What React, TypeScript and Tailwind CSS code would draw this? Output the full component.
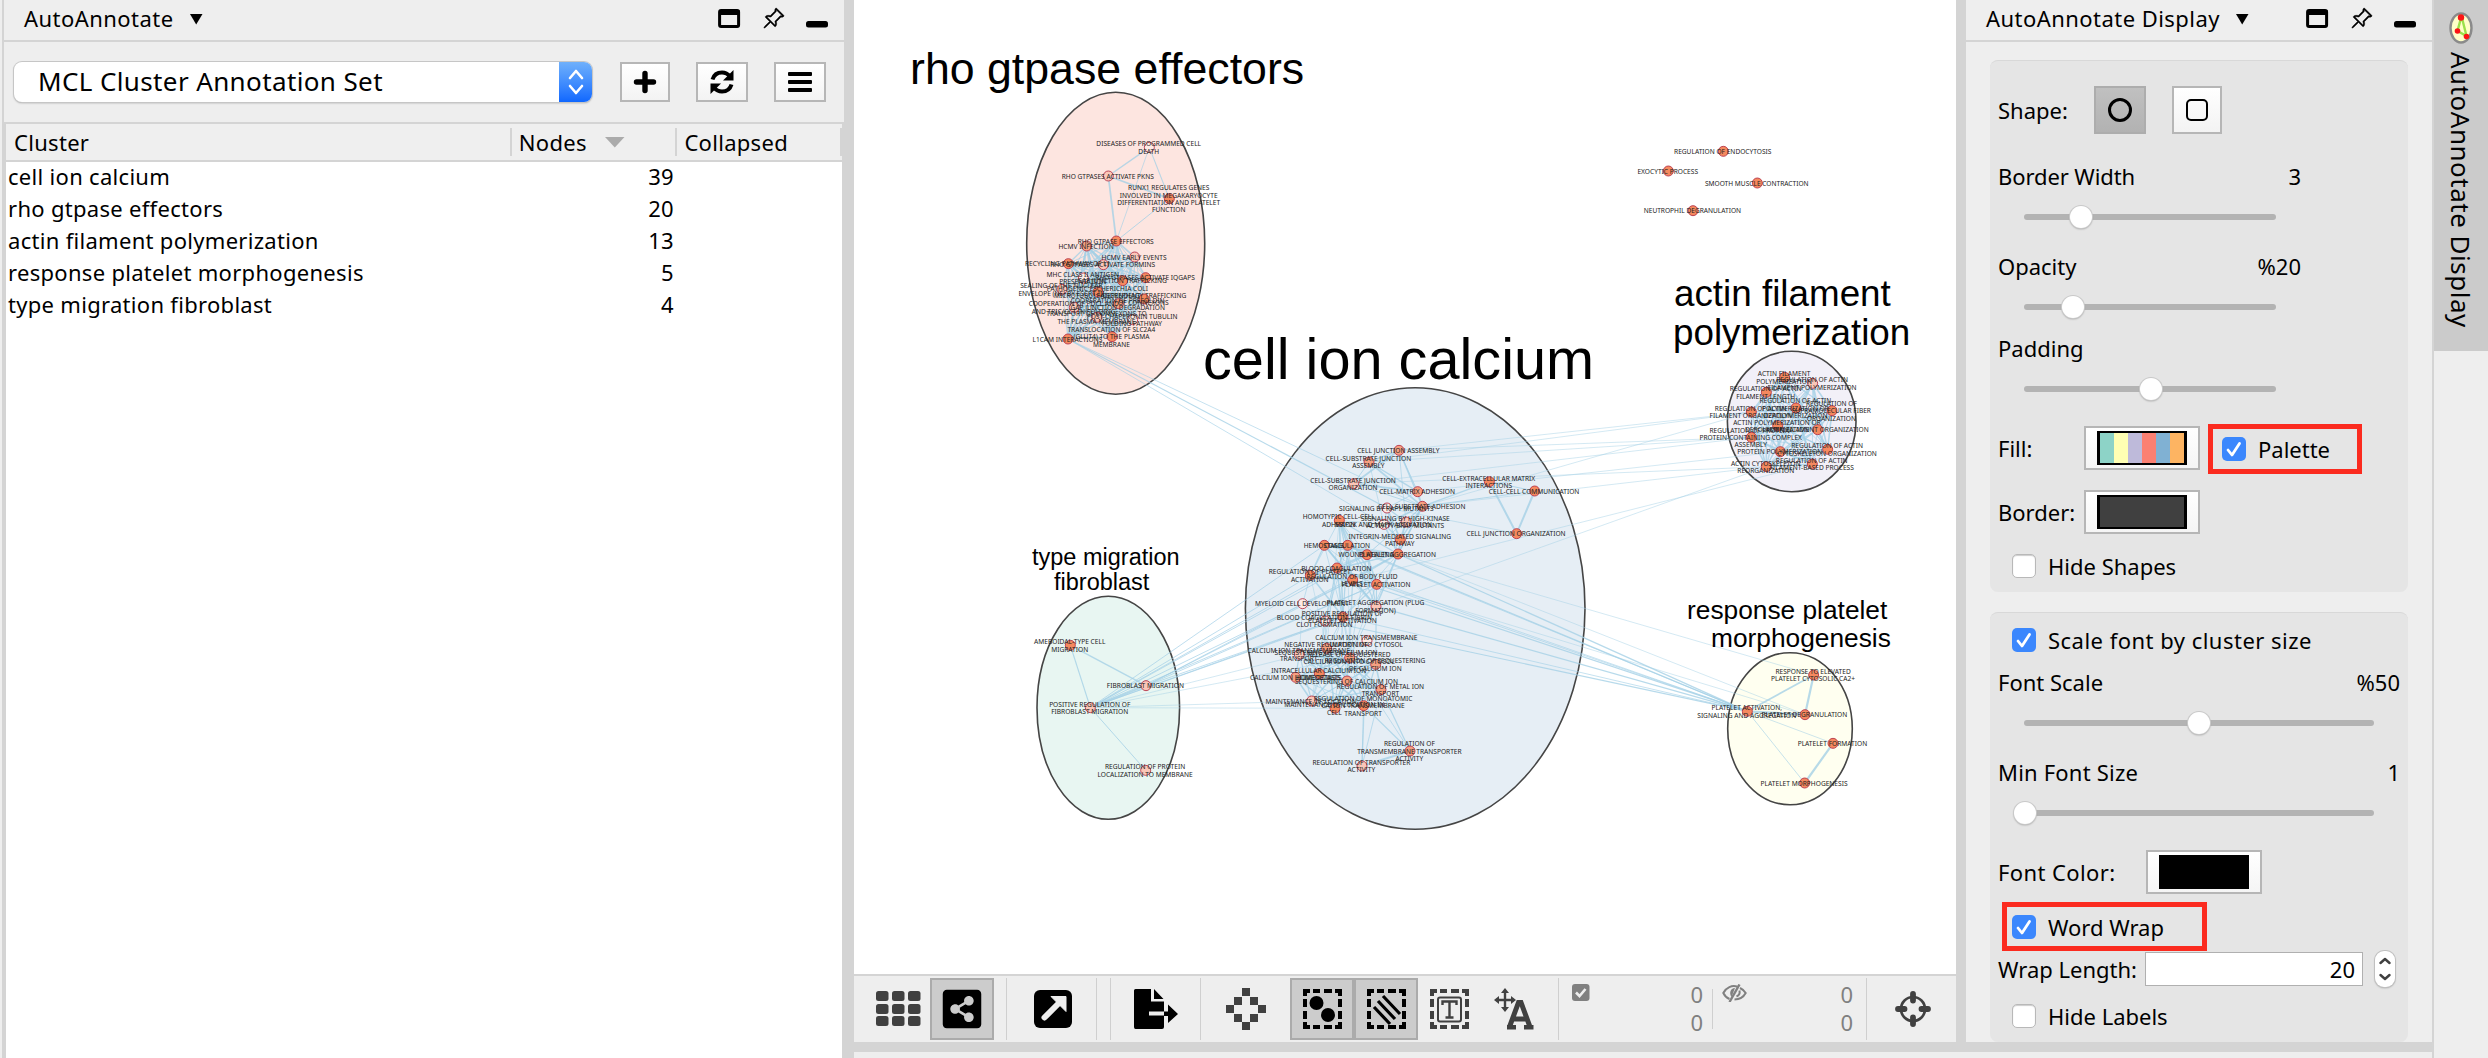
import React from 'react';
import { BsPinAngle } from 'react-icons/bs';
import { FaShareAltSquare } from 'react-icons/fa';

type GraphNode = [number, number, string, string];
type Cluster = { ox: number; oy: number; nodes: GraphNode[] };

const O = '#f5895f';
const M = '#f6a182';
const L = '#fac6b8';
const W = '#fdeae5';

const rho: Cluster = {
  ox: 1000,
  oy: 80,
  nodes: [
    [448, 202, W, 'DISEASES OF PROGRAMMED CELL|DEATH'],
    [325, 288, L, 'RHO GTPASES ACTIVATE PKNS'],
    [508, 356, O, 'RUNX1 REGULATES GENES|INVOLVED IN MEGAKARYOCYTE|DIFFERENTIATION AND PLATELET|FUNCTION'],
    [349, 483, O, 'RHO GTPASE EFFECTORS'],
    [260, 498, M, 'HCMV INFECTION'],
    [404, 531, L, 'HCMV EARLY EVENTS'],
    [205, 551, O, 'RECYCLING PATHWAY OF L1'],
    [310, 554, L, 'RHO GTPASES ACTIVATE FORMINS'],
    [250, 594, W, 'MHC CLASS II ANTIGEN|PRESENTATION'],
    [437, 593, O, 'RHO GTPASES ACTIVATE IQGAPS'],
    [368, 602, O, 'GAP JUNCTION TRAFFICKING'],
    [186, 628, L, 'SEALING OF THE NUCLEAR|ENVELOPE (NE) BY ESCRT-III'],
    [294, 636, O, 'PATHOGENIC ESCHERICHIA COLI|MICROTUBULE-DEPENDENT'],
    [432, 657, O, 'AGGREPHAGY TRAFFICKING|OF CONNEXONS'],
    [355, 671, M, 'COOPERATION OF PREFOLDIN|GAP JUNCTION DEGRADATION'],
    [223, 682, L, 'COOPERATION OF PDCL AND|AND TRIC/CCT IN FOLDING'],
    [291, 712, L, 'TRANSPORT OF CONNEXONS TO|THE PLASMA MEMBRANE'],
    [398, 719, W, 'POST-CHAPERONIN TUBULIN|FOLDING PATHWAY'],
    [336, 770, O, 'TRANSLOCATION OF SLC2A4|(GLUT4) TO THE PLASMA|MEMBRANE'],
    [204, 777, O, 'L1CAM INTERACTIONS'],
  ],
};

const cell: Cluster = {
  ox: 1230,
  oy: 410,
  nodes: [
    [507, 121, M, 'CELL JUNCTION ASSEMBLY'],
    [417, 156, M, 'CELL-SUBSTRATE JUNCTION|ASSEMBLY'],
    [371, 221, L, 'CELL-SUBSTRATE JUNCTION|ORGANIZATION'],
    [563, 245, M, 'CELL-MATRIX ADHESION'],
    [577, 289, M, 'CELL-SUBSTRATE ADHESION'],
    [471, 294, W, 'SIGNALING BY RAF1 MUTANTS'],
    [778, 215, O, 'CELL-EXTRACELLULAR MATRIX|INTERACTIONS'],
    [914, 243, O, 'CELL-CELL COMMUNICATION'],
    [860, 371, O, 'CELL JUNCTION ORGANIZATION'],
    [328, 331, O, 'HOMOTYPIC CELL-CELL|ADHESION'],
    [462, 343, W, 'MAP2K AND MAPK ACTIVATION'],
    [528, 336, L, 'SIGNALING BY HIGH-KINASE|ACTIVITY BRAF MUTANTS'],
    [511, 389, O, 'INTEGRIN-MEDIATED SIGNALING|PATHWAY'],
    [283, 406, O, 'HEMOSTASIS'],
    [353, 406, O, 'COAGULATION'],
    [411, 434, O, 'WOUND HEALING'],
    [504, 432, O, 'PLATELET AGGREGATION'],
    [321, 474, O, 'BLOOD COAGULATION'],
    [241, 496, O, 'REGULATION OF PLATELET|ACTIVATION'],
    [368, 510, O, 'REGULATION OF BODY FLUID|LEVELS'],
    [440, 523, O, 'PLATELET ACTIVATION'],
    [218, 581, W, 'MYELOID CELL DEVELOPMENT'],
    [438, 589, L, 'PLATELET AGGREGATION (PLUG|FORMATION)'],
    [339, 621, O, 'POSITIVE REGULATION OF|PLATELET ACTIVATION'],
    [285, 633, W, 'BLOOD COAGULATION, FIBRIN|CLOT FORMATION'],
    [411, 692, W, 'CALCIUM ION TRANSMEMBRANE|IMPORT INTO CYTOSOL'],
    [290, 715, M, 'NEGATIVE REGULATION OF|SEQUESTERING OF CALCIUM ION'],
    [208, 733, L, 'CALCIUM ION TRANSMEMBRANE|TRANSPORT'],
    [359, 744, M, 'RELEASE OF SEQUESTERED|CALCIUM ION INTO CYTOSOL'],
    [437, 763, M, 'REGULATION OF SEQUESTERING|OF CALCIUM ION'],
    [268, 791, O, 'INTRACELLULAR CALCIUM ION|HOMEOSTASIS'],
    [197, 802, M, 'CALCIUM ION HOMEOSTASIS'],
    [351, 813, M, 'SEQUESTERING OF CALCIUM ION'],
    [453, 839, M, 'REGULATION OF METAL ION|TRANSPORT'],
    [245, 873, L, 'MAINTENANCE OF LOCATION'],
    [401, 887, O, 'REGULATION OF MONOATOMIC|CATION TRANSMEMBRANE|TRANSPORT'],
    [315, 895, O, 'MAINTENANCE OF LOCATION IN|CELL'],
    [540, 1023, M, 'REGULATION OF|TRANSMEMBRANE TRANSPORTER|ACTIVITY'],
    [396, 1068, L, 'REGULATION OF TRANSPORTER|ACTIVITY'],
  ],
};

const actin: Cluster = {
  ox: 1640,
  oy: 270,
  nodes: [
    [434, 322, O, 'ACTIN FILAMENT|POLYMERIZATION'],
    [518, 340, L, 'REGULATION OF ACTIN|FILAMENT POLYMERIZATION'],
    [379, 367, O, 'REGULATION OF ACTIN|FILAMENT LENGTH'],
    [468, 414, O, 'REGULATION OF ACTIN|POLYMERIZATION OR|DEPOLYMERIZATION'],
    [576, 422, O, 'REGULATION OF|SUPRAMOLECULAR FIBER|ORGANIZATION'],
    [334, 426, O, 'REGULATION OF ACTIN|FILAMENT ORGANIZATION'],
    [413, 467, O, 'ACTIN POLYMERIZATION OR|DEPOLYMERIZATION'],
    [533, 479, O, 'ACTIN FILAMENT ORGANIZATION'],
    [334, 502, O, 'REGULATION OF PROTEIN-|PROTEIN-CONTAINING COMPLEX|ASSEMBLY'],
    [421, 545, O, 'PROTEIN POLYMERIZATION'],
    [563, 538, O, 'REGULATION OF ACTIN|CYTOSKELETON ORGANIZATION'],
    [517, 582, O, 'REGULATION OF ACTIN|FILAMENT-BASED PROCESS'],
    [379, 590, O, 'ACTIN CYTOSKELETON|REORGANIZATION'],
  ],
};

const fibro: Cluster = {
  ox: 1000,
  oy: 530,
  nodes: [
    [211, 346, O, 'AMEBOIDAL-TYPE CELL|MIGRATION'],
    [438, 467, L, 'FIBROBLAST MIGRATION'],
    [271, 533, L, 'POSITIVE REGULATION OF|FIBROBLAST MIGRATION'],
    [437, 721, L, 'REGULATION OF PROTEIN|LOCALIZATION TO MEMBRANE'],
  ],
};

const platelet: Cluster = {
  ox: 1640,
  oy: 590,
  nodes: [
    [521, 255, O, 'RESPONSE TO ELEVATED|PLATELET CYTOSOLIC CA2+'],
    [322, 364, O, 'PLATELET ACTIVATION,|SIGNALING AND AGGREGATION'],
    [495, 374, O, 'PLATELET DEGRANULATION'],
    [579, 460, O, 'PLATELET FORMATION'],
    [494, 579, O, 'PLATELET MORPHOGENESIS'],
  ],
};

const loose: Cluster = {
  ox: 1630,
  oy: 135,
  nodes: [
    [280, 49, O, 'REGULATION OF ENDOCYTOSIS'],
    [115, 108, O, 'EXOCYTIC PROCESS'],
    [382, 144, O, 'SMOOTH MUSCLE CONTRACTION'],
    [189, 227, O, 'NEUTROPHIL DEGRANULATION'],
  ],
};

const clusters = [rho, cell, actin, fibro, platelet, loose];

const at = (c: Cluster, i: number): [number, number] => [c.ox + c.nodes[i][0] / 3, c.oy + c.nodes[i][1] / 3];

type Edge = [Cluster, number, Cluster, number, number];
const edges: Edge[] = [];
const link = (a: Cluster, i: number, b: Cluster, j: number, w = 0.8) => edges.push([a, i, b, j, w]);
const mesh = (c: Cluster, ids: number[], w: number, skip = 0) => {
  ids.forEach((a, p) =>
    ids.slice(p + 1).forEach((b) => {
      if (!skip || (a * 7 + b * 5) % skip !== 0) link(c, a, c, b, w + ((a + b) % 3) * 0.4);
    }),
  );
};
const span = (a: number, b: number) => Array.from({ length: b - a + 1 }, (_, i) => a + i);

mesh(rho, span(3, 19), 0.9);
link(rho, 0, rho, 1, 1.4);
link(rho, 0, rho, 2, 1.1);
link(rho, 0, rho, 3, 0.8);
link(rho, 1, rho, 2, 1.8);
link(rho, 1, rho, 3, 1.8);
link(rho, 2, rho, 3, 1);

mesh(cell, [0, 1, 2, 3, 4], 1);
mesh(cell, [4, 5, 10, 11, 12, 16], 0.9);
mesh(cell, [9, 13, 14, 15, 16, 17, 18, 19, 20, 22, 23], 0.8, 4);
mesh(cell, span(25, 36), 0.8, 5);
([[6, 8, 2], [7, 8, 2], [6, 7, 1], [6, 4, 1.4], [7, 4, 1], [8, 5, 0.7], [37, 38, 2], [37, 35, 1.2], [37, 33, 1.2], [37, 28, 0.8], [38, 35, 1.2], [38, 33, 0.9],
  [38, 25, 0.6], [21, 24, 0.8], [21, 18, 0.8], [21, 27, 0.6], [24, 17, 1], [24, 14, 0.8], [24, 23, 1], [23, 28, 0.9], [23, 26, 0.9], [20, 29, 0.8], [20, 28, 0.8],
  [19, 28, 0.7], [19, 32, 0.7], [17, 32, 0.7], [17, 30, 0.7], [22, 29, 0.6], [9, 26, 0.6], [14, 28, 0.6], [15, 4, 1], [16, 4, 1.2], [9, 10, 0.8], [5, 3, 0.9],
  [10, 1, 0.7], [11, 0, 0.8], [24, 26, 0.7], [24, 30, 0.7], [24, 34, 0.6], [18, 26, 0.6], [16, 28, 0.9], [15, 28, 0.8], [23, 36, 0.7], [23, 34, 0.7], [23, 35, 0.7]] as number[][])
  .forEach(([a, b, w]) => link(cell, a, cell, b, w));

mesh(actin, span(0, 12), 0.8);

link(fibro, 0, fibro, 1, 1.4);
link(fibro, 0, fibro, 2, 1.2);
link(fibro, 2, fibro, 3, 1);
link(fibro, 1, fibro, 2, 2);
[13, 15, 17, 18, 19, 20, 22, 23].forEach((n) => link(fibro, 2, cell, n, 0.9));
[16, 19, 20, 23].forEach((n) => link(fibro, 1, cell, n, 0.9));
[26, 28, 34, 36].forEach((n) => link(fibro, 2, cell, n, 0.6));

link(platelet, 0, platelet, 1, 1.8);
link(platelet, 0, platelet, 2, 2.2);
link(platelet, 1, platelet, 2, 2.4);
link(platelet, 1, platelet, 3, 0.7);
link(platelet, 1, platelet, 4, 0.8);
link(platelet, 3, platelet, 4, 2.2);
[14, 15, 16, 17, 19, 20, 22, 23, 24].forEach((n, i) => link(cell, n, platelet, 1, i % 2 ? 0.8 : 1.2));
link(cell, 16, platelet, 0, 0.6);
link(cell, 16, platelet, 2, 0.6);
link(cell, 20, platelet, 2, 0.6);

link(rho, 19, cell, 5, 1.2);
link(rho, 19, cell, 4, 0.8);
link(rho, 19, cell, 10, 0.8);

([[0, 5], [1, 5], [0, 8], [1, 8], [2, 8], [4, 5], [3, 9], [4, 12], [2, 12], [22, 12], [19, 11]] as number[][]).forEach(([a, b]) => link(cell, a, actin, b, 0.6));

const hulls: [number, number, number, number, string][] = [
  [1115.7, 243.3, 89, 151, '#fde5e0'],
  [1415.2, 608.5, 169.8, 220.8, '#e6eef5'],
  [1791.7, 421.5, 64.3, 70.2, '#f2f0f8'],
  [1108.3, 707.8, 71.3, 111.5, '#e8f6f2'],
  [1790, 728.7, 62.3, 76, '#fffff0'],
];

const titles: [number, number, number, string][] = [
  [910, 84, 44.7, 'rho gtpase effectors'],
  [1203, 379, 57.7, 'cell ion calcium'],
  [1674, 305.7, 36.8, 'actin filament'],
  [1673, 345, 36.8, 'polymerization'],
  [1032, 565, 23.5, 'type migration'],
  [1054, 590, 23.5, 'fibroblast'],
  [1687, 619, 26.3, 'response platelet'],
  [1711, 646.7, 26.3, 'morphogenesis'],
];

function Network() {
  return (
    <svg width="1102" height="974" viewBox="854 0 1102 974" className="block shrink-0 bg-white">
      {hulls.map(([cx, cy, rx, ry, fill]) => (
        <ellipse key={cx} cx={cx} cy={cy} rx={rx} ry={ry} fill={fill} stroke="#454545" strokeWidth="1.6" />
      ))}
      <g stroke="#a3d0e6" strokeOpacity="0.78">
        {edges.map(([a, i, b, j, w], k) => {
          const [x1, y1] = at(a, i);
          const [x2, y2] = at(b, j);
          return <line key={k} x1={x1} y1={y1} x2={x2} y2={y2} strokeWidth={w} />;
        })}
      </g>
      {clusters.map((c, ci) => (
        <g key={ci}>
          {c.nodes.map((n, i) => {
            const [x, y] = at(c, i);
            return <circle key={i} cx={x} cy={y} r="5" fill={n[2]} stroke="#b5364a" strokeWidth="0.9" />;
          })}
          {c.nodes.map((n, i) => {
            const [x, y] = at(c, i);
            const lines = n[3].split('|');
            return lines.map((t, k) => (
              <text
                key={i + '-' + k}
                x={x - 0.6}
                y={y + 2.6 + (k - (lines.length - 1) / 2) * 7.4}
                textAnchor="middle"
                fontSize="6.6"
                fill="#222"
                fontFamily="'Noto Sans', sans-serif"
              >
                {t}
              </text>
            ));
          })}
        </g>
      ))}
      {titles.map(([x, y, s, t]) => (
        <text key={t} x={x} y={y} fontSize={s} fill="#000" fontFamily="'Liberation Sans', Arial, sans-serif">
          {t}
        </text>
      ))}
    </svg>
  );
}

function PanelHeader({ title }: { title: string }) {
  return (
    <div className="flex h-[42px] shrink-0 items-center border-b-2 border-[#d4d4d4] pr-4 pl-5">
      <span className="relative -top-[2.5px] tracking-[0.45px]">{title}</span>
      <svg width="13" height="11" className="relative -top-[1px] ml-4 shrink-0">
        <path d="M0 0H12.5L6.2 10.5Z" />
      </svg>
      <svg width="23" height="20" className="relative -top-[1px] ml-auto shrink-0">
        <rect x="1.6" y="1.6" width="19" height="16" rx="1.5" fill="none" stroke="#000" strokeWidth="3" />
        <path d="M1 1H21.5V6H1Z" />
      </svg>
      <BsPinAngle className="relative -top-[2px] ml-[21px] size-[23px] shrink-0" stroke="#000" strokeWidth="0.3" />
      <svg width="22" height="20" className="relative -top-[1px] ml-[21px] shrink-0">
        <rect y="12" width="22" height="6.5" rx="2.5" />
      </svg>
    </div>
  );
}

const iconButton = 'flex h-10 shrink-0 items-center justify-center border-2 border-[#b6b6b6] bg-linear-to-b from-white to-[#f3f3f3]';

const rows: [string, number][] = [
  ['cell ion calcium', 39],
  ['rho gtpase effectors', 20],
  ['actin filament polymerization', 13],
  ['response platelet morphogenesis', 5],
  ['type migration fibroblast', 4],
];

function LeftPanel() {
  return (
    <div className="flex h-full w-[842px] shrink-0 flex-col border-l-2 border-[#d4d4d4]">
      <PanelHeader title="AutoAnnotate" />
      <div className="flex h-20 shrink-0 items-center pr-4 pl-[10px]">
        <div className="flex h-10 w-[578px] shrink-0 overflow-hidden rounded-[8px] bg-white shadow-[0_0_0_1px_#c6c6c6,0_1px_2px_#999]">
          <span className="flex-1 pl-[24px] text-[26px] leading-[38px] tracking-[0.38px]">MCL Cluster Annotation Set</span>
          <div className="flex w-[33px] items-center justify-center bg-linear-to-b from-[#6fb0fb] to-[#0f67fe]">
            <svg width="16" height="26" fill="none" stroke="#fff" strokeWidth="2.6" strokeLinecap="round" strokeLinejoin="round">
              <path d="M2 9L8 2L14 9M2 17L8 24L14 17" />
            </svg>
          </div>
        </div>
        <div className="ml-7 flex gap-[26px]">
          <div className={iconButton + ' w-[50px]'}>
            <svg width="24" height="24" stroke="#000" strokeWidth="5.4" strokeLinecap="round">
              <path d="M12 3.500V20.500M3.500 12H20.500" />
            </svg>
          </div>
          <div className={iconButton + ' w-[52px]'}>
            <svg width="26" height="26" fill="none" stroke="#000" strokeWidth="4">
              <path d="M3.500 10.500C5 5.500 9 3.500 13 3.500C16.500 3.500 19 5 21 7.500" />
              <path d="M22.500 15.500C21 20.500 17 22.500 13 22.500C9.500 22.500 7 21 5 18.500" />
              <path d="M24.500 1V11.500H14Z" fill="#000" stroke="none" />
              <path d="M1.500 25V14.500H12Z" fill="#000" stroke="none" />
            </svg>
          </div>
          <div className={iconButton + ' w-[52px]'}>
            <svg width="24" height="22">
              <rect y="1" width="24" height="4" rx="1" />
              <rect y="9" width="24" height="4" rx="1" />
              <rect y="17" width="24" height="4" rx="1" />
            </svg>
          </div>
        </div>
      </div>
      <div className="flex flex-1 flex-col border-t-2 border-r-2 border-l-2 border-[#d4d4d4] bg-white tracking-[0.3px]">
        <div className="flex h-[38px] shrink-0 items-center border-b-2 border-[#d4d4d4] bg-[#efefef]">
          <span className="w-[505px] pl-2">Cluster</span>
          <div className="flex h-7 w-[166px] items-center border-l-2 border-[#d4d4d4] pl-[7px]">
            Nodes
            <svg width="20" height="11" className="ml-[18px]">
              <path d="M0 0H19.500L9.800 10.500Z" fill="#ababab" />
            </svg>
          </div>
          <div className="flex h-7 w-[167px] items-center border-x-2 border-[#d4d4d4] pl-[7px]">Collapsed</div>
        </div>
        <div className="-mt-[2.5px] flex flex-col">
          {rows.map(([name, count]) => (
            <div key={name} className="flex h-8 shrink-0 items-center">
              <span className="w-[505px] pl-[2px]">{name}</span>
              <span className="w-[163px] text-right">{count}</span>
            </div>
          ))}
        </div>
      </div>
    </div>
  );
}

function DashedFrame({ color, children }: { color: string; children: React.ReactNode }) {
  return (
    <svg width="41" height="42" fill={color}>
      <path d="M1 7V1H8V5H5V8H1ZM33 1H40V8H36V5H33ZM1 34H5V37H8V41H1ZM36 34H40V41H33V37H36Z" />
      <path d="M11 1H18V5H11ZM22 1H30V5H22ZM11 37H18V41H11ZM22 37H30V41H22ZM1 11H5V19H1ZM1 23H5V31H1ZM36 11H40V19H36ZM36 23H40V31H36Z" />
      {children}
    </svg>
  );
}

const sep = 'h-[62px] w-px shrink-0 bg-[#cfcfcf]';
const toggled = 'flex h-[62px] w-16 shrink-0 items-center justify-center border-2 border-[#ababab] bg-[#cccccc]';

function Counts({ icon }: { icon: React.ReactNode }) {
  return (
    <div className="flex h-[62px] justify-between text-[#808080]">
      <div className="pt-[6px]">{icon}</div>
      <div className="flex flex-col text-right leading-7">
        <span className="pt-[2px]">0</span>
        <span>0</span>
      </div>
    </div>
  );
}

function Toolbar() {
  return (
    <div className="flex h-[68px] shrink-0 items-center border-t-2 border-[#d4d4d4] bg-[#eeeeee] text-black">
      <svg width="46" height="36" className="ml-[21px] shrink-0" fill="#404040">
        {[0, 13, 25].map((y) => [1, 17, 33].map((x) => <rect key={x + '-' + y} x={x} y={y} width="12.500" height="10" rx="2.500" />))}
      </svg>
      <div className={toggled + ' ml-[9px]'}>
        <FaShareAltSquare className="size-[44px]" />
      </div>
      <div className={sep + ' ml-3'} />
      <svg width="38" height="38" className="ml-[27px] shrink-0">
        <rect width="38" height="38" rx="6" />
        <path d="M10.500 27.500L25 13" stroke="#eee" strokeWidth="6" strokeLinecap="round" />
        <path d="M17 6.500H32V21.500Z" fill="#eee" stroke="#eee" strokeWidth="1" strokeLinejoin="round" />
      </svg>
      <div className={sep + ' ml-6'} />
      <div className={sep + ' ml-[13px]'} />
      <svg width="45" height="40" className="ml-[23px] shrink-0">
        <path d="M1.500 0H17V12.500H30V22.500H15V26.500H30V38Q30 40 28 40H1.500Q0 40 0 38V1.500Q0 0 1.500 0ZM20 0L29.500 10H20ZM30 22.500H34V15.500L44 25L34 34V27H30Z" />
      </svg>
      <div className={sep + ' ml-[21px]'} />
      <svg width="40" height="42" className="ml-[25px] shrink-0" fill="#404040">
        <path d="M16 0h8v8h-8zM8 9h8v8h-8zM24 9h8v8h-8zM0 17h8v8h-8zM32 17h8v8h-8zM8 26h8v8h-8zM24 26h8v8h-8zM16 34h8v8h-8z" />
      </svg>
      <div className={toggled + ' ml-6'}>
        <DashedFrame color="#000">
          <circle cx="14.500" cy="15" r="7" />
          <circle cx="26" cy="27" r="7" />
        </DashedFrame>
      </div>
      <div className={toggled}>
        <DashedFrame color="#000">
          <path d="M8 19L24 36M12 13L29 31M17 8L34 26" stroke="#000" strokeWidth="3.200" />
        </DashedFrame>
      </div>
      <div className="ml-[11px] shrink-0">
        <DashedFrame color="#404040">
          <rect x="9" y="9.500" width="23" height="24" rx="2" fill="none" stroke="#404040" strokeWidth="2" />
          <path d="M13.500 17V13.500H27.500V17M20.500 13.500V29M16.500 29.500H24.500" fill="none" stroke="#404040" strokeWidth="2.400" />
        </DashedFrame>
      </div>
      <svg width="40" height="42" className="ml-6 shrink-0" fill="#404040">
        <path d="M11 3V21M2 12H20" stroke="#404040" strokeWidth="2.400" />
        <path d="M11 0L15 5H7ZM11 24L15 19H7ZM0 12L5 8V16ZM22 12L17 8V16Z" />
        <path d="M15.500 38.800L24.500 14.500H27L36 38.800M19 31H32" fill="none" stroke="#404040" strokeWidth="5" />
        <path d="M13 37H22V41.500H13ZM30 37H39.500V41.500H30Z" />
      </svg>
      <div className={sep + ' ml-6'} />
      <div className="ml-[13px] w-[131px] shrink-0">
        <Counts
          icon={
            <svg width="18" height="17">
              <rect width="17.500" height="17" rx="3" fill="#808080" />
              <path d="M4 8.500L7.500 12L13.500 5" fill="none" stroke="#eee" strokeWidth="2.600" />
            </svg>
          }
        />
      </div>
      <div className="ml-[9px] h-10 w-px shrink-0 bg-[#cfcfcf]" />
      <div className="ml-[9px] w-[131px] shrink-0">
        <Counts
          icon={
            <svg width="25" height="18" fill="none" stroke="#808080" strokeWidth="2">
              <path d="M15.500 2.800C10 0.800 4 3.500 1.300 9C2.800 12 5 14 7.500 15M18 4C20.500 5.200 22.500 7 23.700 9C21.500 13 17 15.500 12.500 15.500" />
              <path d="M17.500 0.500L7.500 18" strokeWidth="2.400" />
              <path d="M13 4C8 4 7 10 9.500 13Z" fill="#808080" stroke="none" />
              <path d="M17.500 6.500C18 9 17 11.500 14.500 12.500" />
            </svg>
          }
        />
      </div>
      <div className={sep + ' ml-[13px]'} />
      <svg width="36" height="36" className="ml-[28px] shrink-0" fill="none" stroke="#404040">
        <circle cx="18" cy="18" r="12" strokeWidth="2.600" />
        <path d="M18 3V9.500M18 26.500V33M3 18H9.500M26.500 18H33" strokeWidth="5.800" strokeLinecap="round" />
      </svg>
    </div>
  );
}

function Slider({ width, thumb }: { width: number; thumb: number }) {
  return (
    <div className="flex h-[42px] shrink-0 items-center pl-[34px]">
      <div className="relative h-[6px] rounded-full bg-[#b3b3b3]" style={{ width }}>
        <div
          className="absolute top-1/2 size-[22px] -translate-x-1/2 -translate-y-1/2 rounded-full bg-white shadow-[0_0_0_1px_#c9c9c9,0_1px_2px_#888]"
          style={{ left: thumb }}
        />
      </div>
    </div>
  );
}

function Check({ on, label, className = '' }: { on?: boolean; label: string; className?: string }) {
  return (
    <div className="flex h-6 items-center">
      {on ? (
        <svg width="24" height="24" className="shrink-0">
          <rect width="24" height="24" rx="5" fill="#3b87fd" />
          <path d="M6 13L10 18L17.500 6.500" fill="none" stroke="#fff" strokeWidth="2.800" strokeLinecap="round" strokeLinejoin="round" />
        </svg>
      ) : (
        <div className="size-6 shrink-0 rounded-[5px] border border-[#b8b8b8] bg-white shadow-[inset_0_1px_1px_#ccc]" />
      )}
      <span className={'ml-3 ' + className}>{label}</span>
    </div>
  );
}

function Swatch({ colors, className }: { colors: string[]; className: string }) {
  return (
    <div className={'flex h-11 w-[116px] shrink-0 items-center justify-center border-2 border-[#b6b6b6] bg-linear-to-b from-white to-[#f5f5f5] ' + className}>
      <div className="flex h-[34px] w-[90px] border-2 border-x-[3px] border-black">
        {colors.map((c) => (
          <div key={c} className="flex-1" style={{ background: c }} />
        ))}
      </div>
    </div>
  );
}

const group = 'flex w-[418px] flex-col rounded-[8px] border-t border-[#d8d8d8] bg-[#e5e5e5]';

function DisplayPanel() {
  return (
    <div className="flex h-[1042px] w-[466px] shrink-0 flex-col">
      <PanelHeader title="AutoAnnotate Display" />
      <div className="flex flex-col gap-5 pt-[18px] pl-6">
        <div className={group + ' h-[532px]'}>
          <div className="mt-[25px] flex h-12 items-center pl-2">
            <span className="w-24">Shape:</span>
            <div className="flex h-12 w-[52px] items-center justify-center border-2 border-[#adadad] bg-linear-to-b from-[#c0c0c0] to-[#b2b2b2]">
              <div className="size-6 rounded-full border-[3px] border-black" />
            </div>
            <div className="ml-[26px] flex h-12 w-[50px] items-center justify-center border-2 border-[#b6b6b6] bg-linear-to-b from-white to-[#f3f3f3]">
              <div className="size-[22px] rounded-[5px] border-2 border-black" />
            </div>
          </div>
          <div className="mt-[22px] flex h-10 w-[311px] items-center justify-between pl-2">
            <span className="tracking-[-0.1px]">Border Width</span>
            <span>3</span>
          </div>
          <Slider width={252} thumb={57} />
          <div className="mt-2 flex h-10 w-[311px] items-center justify-between pl-2">
            <span>Opacity</span>
            <span>%20</span>
          </div>
          <Slider width={252} thumb={49} />
          <div className="flex h-10 items-center pl-2">Padding</div>
          <Slider width={252} thumb={127} />
          <div className="mt-[14px] flex h-[50px] items-center pl-2">
            <span className="relative -top-px w-[86px]">Fill:</span>
            <Swatch className="relative -top-px" colors={['#8dd3c7', '#ffffb3', '#bebada', '#fb8072', '#80b1d3', '#fdb462']} />
            <div className="ml-2 flex h-[50px] w-[154px] items-center border-[5px] border-[#fb2b1f] pl-[9px]">
              <Check on label="Palette" />
            </div>
          </div>
          <div className="mt-4 flex h-11 items-center pl-2">
            <span className="w-[86px]">Border:</span>
            <Swatch className="" colors={['#404040']} />
          </div>
          <div className="mt-5 pl-[22px]">
            <Check label="Hide Shapes" />
          </div>
        </div>
        <div className={group + ' h-[430px]'}>
          <div className="mt-[15px] pl-[22px]">
            <Check on label="Scale font by cluster size" className="tracking-[0.48px]" />
          </div>
          <div className="mt-[10px] flex h-10 items-center justify-between pr-2 pl-2">
            <span>Font Scale</span>
            <span>%50</span>
          </div>
          <Slider width={350} thumb={175} />
          <div className="mt-2 flex h-10 items-center justify-between pr-2 pl-2">
            <span className="tracking-[0.2px]">Min Font Size</span>
            <span>1</span>
          </div>
          <Slider width={350} thumb={1} />
          <div className="mt-4 flex h-11 items-center pl-2">
            <span className="w-[148px] tracking-[0.4px]">Font Color:</span>
            <Swatch className="" colors={['#000000']} />
          </div>
          <div className="mt-2 ml-3 flex h-[49px] w-[205px] items-center border-[5px] border-[#fb2b1f] pl-[5px]">
            <Check on label="Word Wrap" />
          </div>
          <div className="flex h-9 items-center pl-2">
            <span className="w-[147px] whitespace-nowrap">Wrap Length:</span>
            <div className="h-[34px] w-[218px] border border-[#b0b0b0] bg-white pr-[7px] text-right leading-[32px]">20</div>
            <div className="ml-3 flex h-9 w-5 items-center justify-center rounded-[9px] bg-white shadow-[0_0_0_1px_#c0c0c0,0_1px_2px_#999]">
              <svg width="12" height="24" fill="none" stroke="#404040" strokeWidth="2.400" strokeLinecap="round" strokeLinejoin="round">
                <path d="M1.500 6L6 2L10.500 6M1.500 18L6 22L10.500 18" />
              </svg>
            </div>
          </div>
          <div className="mt-[17px] pl-[22px]">
            <Check label="Hide Labels" />
          </div>
        </div>
      </div>
    </div>
  );
}

function SideTabs() {
  return (
    <div className="flex w-[56px] shrink-0 flex-col border-l-2 border-[#d4d4d4]">
      <div className="flex h-[351px] flex-col items-center bg-[#cbcbcb] pt-3">
        <svg width="24" height="32">
          <ellipse cx="12" cy="16" rx="10.500" ry="14.500" fill="#ffffc8" stroke="#8a8a8a" strokeWidth="2.400" />
          <path d="M12 6L8.500 19L17.500 24L13 6" fill="none" stroke="#9be04a" strokeWidth="2.400" />
          <circle cx="12" cy="5.500" r="3.200" fill="#fb1414" />
          <circle cx="8.500" cy="19" r="2.800" fill="#fb1414" />
          <circle cx="17.500" cy="24.500" r="2.800" fill="#fb1414" />
        </svg>
        <span className="mt-2 text-[26px] leading-[30px] tracking-[0.5px] whitespace-nowrap [writing-mode:vertical-rl]">AutoAnnotate Display</span>
      </div>
    </div>
  );
}

export default function App() {
  return (
    <div className="flex h-[1058px] w-[2488px] overflow-hidden bg-[#eeeeee] font-['Noto_Sans',sans-serif] text-[22px] leading-[30px] text-black">
      <div className="w-[2px] shrink-0" />
      <LeftPanel />
      <div className="w-[10px] shrink-0 bg-[#d4d4d4]" />
      <div className="flex w-[1578px] shrink-0 flex-col">
        <div className="flex h-[1042px] shrink-0">
          <div className="flex w-[1102px] shrink-0 flex-col">
            <Network />
            <Toolbar />
          </div>
          <div className="w-[10px] shrink-0 bg-[#d4d4d4]" />
          <DisplayPanel />
        </div>
        <div className="h-[10px] shrink-0 bg-[#d4d4d4]" />
      </div>
      <SideTabs />
    </div>
  );
}
